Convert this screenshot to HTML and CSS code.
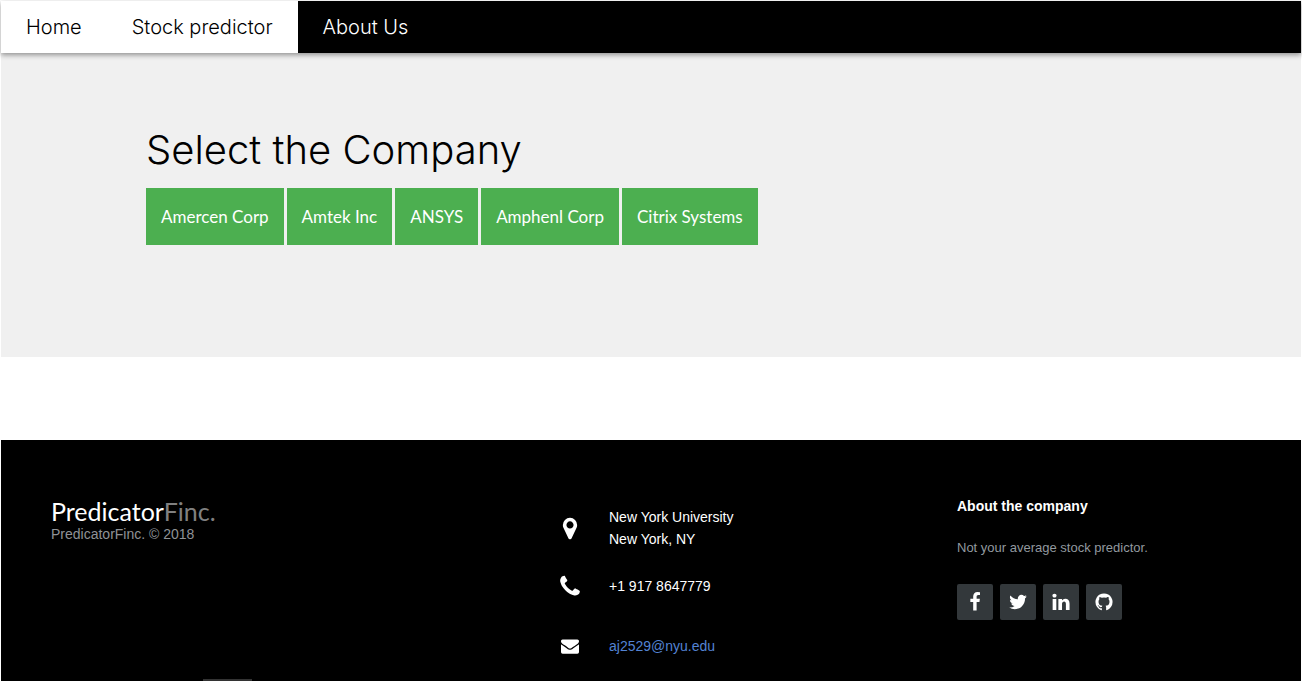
FILE: index.html
```html
<!DOCTYPE html>
<html lang="en">
<head>
<meta charset="utf-8">
<meta name="viewport" content="width=device-width, initial-scale=1">
<title>PredicatorFinc.</title>
<link rel="stylesheet" href="styles.css">
</head>
<body>
<nav class="navbar">
  <a class="nav-link" href="#">Home</a>
  <a class="nav-link" href="#">Stock predictor</a>
  <a class="nav-link nav-link-dark" href="#">About Us</a>
</nav>
<main class="picker">
  <h1 class="picker-title">Select the Company</h1>
  <div class="companies">
    <button class="company" type="button">Amercen Corp</button>
    <button class="company" type="button">Amtek Inc</button>
    <button class="company" type="button">ANSYS</button>
    <button class="company" type="button">Amphenl Corp</button>
    <button class="company" type="button">Citrix Systems</button>
  </div>
</main>
<footer class="footer">
  <div class="footer-columns">
    <div class="footer-brand">
      <h2 class="brand">Predicator<span class="brand-suffix">Finc.</span></h2>
      <p class="copyright">PredicatorFinc. © 2018</p>
    </div>
    <address class="contacts">
      <div class="contact contact-address">
        <svg class="contact-icon" viewBox="-384 0 1792 1792" aria-hidden="true"><path d="M768 640q0-106-75-181t-181-75-181 75-75 181 75 181 181 75 181-75 75-181zm256 0q0 109-33 179l-364 774q-16 33-47.500 52t-67.500 19-67.500-19-46.500-52l-365-774q-33-70-33-179 0-212 150-362t362-150 362 150 150 362z"/></svg>
        <p class="contact-text">New York University<br>New York, NY</p>
      </div>
      <div class="contact">
        <svg class="contact-icon" viewBox="0 0 1792 1792" aria-hidden="true"><path d="M1600 1240q0 27-10 70.500t-21 68.500q-21 50-122 106-94 51-186 51-27 0-53-3.500t-57.500-12.500-47-14.500-55.500-20.500-49-18q-98-35-175-83-127-79-264-216t-216-264q-48-77-83-175-3-9-18-49t-20.500-55.500-14.500-47-12.500-57.500-3.500-53q0-92 51-186 56-101 106-122 25-11 68.500-21t70.500-10q14 0 21 3 18 6 53 76 11 19 30 54t35 63.500 31 53.500q3 4 17.500 25t21.500 35.500 7 28.500q0 20-28.500 50t-62 55-62 53-28.500 46q0 9 5 22.500t8.500 20.500 14 24 11.500 19q76 137 174 235t235 174q2 1 19 11.500t24 14 20.500 8.500 22.500 5q18 0 46-28.500t53-62 55-62 50-28.500q14 0 28.500 7t35.500 21.500 25 17.500q25 15 53.500 31t63.500 35 54 30q70 35 76 53 3 7 3 21z"/></svg>
        <p class="contact-text">+1 917 8647779</p>
      </div>
      <div class="contact">
        <svg class="contact-icon contact-icon-small" viewBox="0 0 1792 1792" aria-hidden="true"><path d="M1792 710v794q0 66-47 113t-113 47h-1472q-66 0-113-47t-47-113v-794q44 49 101 87 362 246 497 345 57 42 92.500 65.500t94.500 48 110 24.500h2q51 0 110-24.500t94.500-48 92.500-65.500q170-123 498-345 57-39 100-87zm0-294q0 79-49 151t-122 123q-376 261-468 325-10 7-42.500 31t-54 38.500-52 32.500-57.500 27-50 9h-2q-23 0-50-9t-57.500-27-52-32.500-54-38.500-42.500-31q-91-64-262-182.500t-205-142.500q-62-42-117-115.500t-55-136.500q0-78 41.500-130t118.500-52h1472q65 0 112.500 47t47.500 113z"/></svg>
        <p class="contact-text"><a class="mail" href="mailto:aj2529@nyu.edu">aj2529@nyu.edu</a></p>
      </div>
    </address>
    <section class="about">
      <h3 class="about-title">About the company</h3>
      <p class="about-text">Not your average stock predictor.</p>
      <div class="social">
        <a class="social-link" href="#" aria-label="Facebook"><svg class="social-icon" viewBox="0 0 1792 1792"><path d="M1343 12v264h-157q-86 0-116 36t-30 108v189h293l-39 296h-254v759h-306v-759h-255v-296h255v-218q0-186 104-288.500t277-102.500q147 0 228 12z"/></svg></a>
        <a class="social-link" href="#" aria-label="Twitter"><svg class="social-icon" viewBox="0 0 1792 1792"><path d="M1684 408q-67 98-162 167 1 14 1 42 0 130-38 259.500t-115.500 248.500-184.500 210.500-258 146-323 54.500q-271 0-496-145 35 4 78 4 225 0 401-138-105-2-188-64.500t-114-159.500q33 5 61 5 43 0 85-11-112-23-185.500-111.500t-73.500-205.500v-4q68 38 146 41-66-44-105-115t-39-154q0-88 44-163 121 149 294.500 238.500t371.500 99.500q-8-38-8-74 0-134 94.500-228.500t228.500-94.500q140 0 236 102 109-21 205-78-37 115-142 178 93-10 186-50z"/></svg></a>
        <a class="social-link" href="#" aria-label="LinkedIn"><svg class="social-icon" viewBox="0 0 1792 1792"><path d="M477 625v991h-330v-991h330zm21-306q1 73-50.500 122t-135.500 49h-2q-82 0-132-49t-50-122q0-74 51.500-122.500t134.500-48.500 133 48.500 51 122.500zm1166 729v568h-329v-530q0-105-40.500-164.500t-126.500-59.500q-63 0-105.500 34.500t-63.500 85.500q-11 30-11 81v553h-329q2-399 2-647t-1-296l-1-48h329v144h-2q20-32 41-56t56.500-52 87-43.500 114.500-15.500q171 0 275 113.500t104 332.500z"/></svg></a>
        <a class="social-link" href="#" aria-label="GitHub"><svg class="social-icon" viewBox="0 0 1792 1792"><path d="M896 128q209 0 385.500 103t279.500 279.500 103 385.500q0 251-146.500 451.500t-378.500 277.500q-27 5-40-7t-13-30q0-3 .5-76.500t.5-134.500q0-97-52-142 57-6 102.500-18t94-39 81-66.500 53-105 20.500-150.500q0-119-79-206 37-91-8-204-28-9-81 11t-92 44l-38 24q-93-26-192-26t-192 26q-16-11-42.500-27t-83.500-38.500-85-13.500q-45 113-8 204-79 87-79 206 0 85 20.500 150t52.500 105 80.500 67 94 39 102.500 18q-39 36-49 103-21 10-45 15t-57 5-65.500-21.500-55.500-62.500q-19-32-48.500-52t-49.500-24l-20-3q-21 0-29 4.500t-5 11.500 9 14 13 12l7 5q22 10 43.500 38t31.500 51l10 23q13 38 44 61.500t67 30 69.500 7 55.500-3.500l23-4q0 38 .5 88.500t.5 54.500q0 18-13 30t-40 7q-232-77-378.500-277.500t-146.500-451.500q0-209 103-385.500t279.500-279.500 385.500-103z"/></svg></a>
      </div>
    </section>
  </div>
  <div class="footer-mark"></div>
</footer>
</body>
</html>
```

FILE: styles.css
```css
* {
  box-sizing: border-box;
}

body {
  margin: 0;
  padding: 1px 1px 0;
  background: #fff;
  color: #000;
  font-family: "Liberation Sans", Arial, sans-serif;
  font-size: 14px;
}

h1, h2, h3, p {
  margin: 0;
  font-weight: 400;
}

a {
  text-decoration: none;
}

.navbar {
  position: relative;
  display: flex;
  background: #000;
  box-shadow: 0 2px 5px rgba(0, 0, 0, 0.4);
}

.nav-link {
  padding: 14px 25px;
  background: #fff;
  color: #000;
  font-family: Inter, sans-serif;
  font-size: 20px;
  font-weight: 300;
  line-height: 24px;
}

.nav-link-dark {
  background: #000;
  color: #fff;
}

.picker {
  padding: 70px 145px 112px;
  background: #f0f0f0;
}

.picker-title {
  margin-bottom: 11px;
  font-family: Inter, sans-serif;
  font-size: 40px;
  font-weight: 300;
  line-height: 54px;
}

.companies {
  display: flex;
  flex-wrap: wrap;
  gap: 3px;
}

.company {
  padding: 16px 15px;
  border: 0;
  background: #4caf50;
  color: #fff;
  font-family: Lato, sans-serif;
  font-size: 17px;
  line-height: 25px;
  cursor: pointer;
}

.footer {
  margin-top: 83px;
  padding: 55px 50px 0;
  background: #000;
}

.footer-columns {
  display: flex;
  gap: 3px;
}

.footer-brand {
  flex: 0 0 40%;
  padding-top: 3px;
}

.brand {
  color: #fff;
  font-family: Lato, sans-serif;
  font-size: 25px;
  line-height: 26px;
}

.brand-suffix {
  color: #808080;
}

.copyright {
  color: #8f9296;
  font-size: 14px;
  line-height: 20px;
}

.contacts {
  flex: 0 0 35%;
  padding: 5px 0 3px 17px;
  font-style: normal;
}

.contact {
  display: flex;
  align-items: center;
  min-height: 60px;
  gap: 20px;
}

.contact-address {
  min-height: 56px;
}

.contact-icon {
  width: 38px;
  height: 25px;
  fill: #fff;
}

.contact-icon-small {
  height: 18px;
}

.contact-text {
  color: #fff;
  font-size: 14px;
  line-height: 22px;
}

.mail {
  color: #5383d3;
}

.about {
  flex: 1;
}

.about-title {
  color: #fff;
  font-size: 14px;
  font-weight: 700;
  line-height: 22px;
}

.about-text {
  margin: 21px 0 26px;
  color: #92999f;
  font-size: 13px;
  line-height: 20px;
}

.social {
  display: flex;
  gap: 7px;
}

.social-link {
  display: grid;
  place-items: center;
  width: 36px;
  height: 36px;
  border-radius: 2px;
  background: #33383b;
}

.social-icon {
  width: 20px;
  height: 20px;
  fill: #fff;
}

.footer-mark {
  width: 49px;
  height: 2px;
  margin-left: 152px;
  background: #333;
}
```
